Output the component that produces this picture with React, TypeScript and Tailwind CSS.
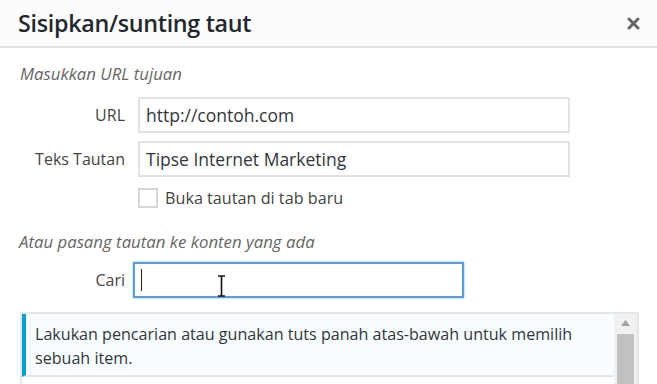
import React from 'react';

const font = { fontFamily: '"Open Sans", "Noto Sans", "Liberation Sans", sans-serif' };

function Field({ label, value }: { label: string; value: string }) {
  return (
    <div className="flex items-center">
      <div className="w-[105px] text-right text-[16px] text-[#444] mr-[13px]">{label}</div>
      <div className="w-[432px] h-[36px] border-2 border-[#e2e2e2] bg-white flex items-center px-[6px] text-[17.5px] text-[#32373c]">
        {value}
      </div>
    </div>
  );
}

export default function App() {
  return (
    <div className="w-[657px] h-[384px] bg-white overflow-hidden relative" style={font}>
      {/* Header */}
      <div className="h-[48px] bg-[#fcfcfc] border-b-2 border-[#e1e1e1] flex items-center justify-between pl-[18px] pr-[17px]">
        <h1 className="text-[23.3px] leading-[28px] font-semibold text-[#23282d] tracking-[-0.3px]">Sisipkan/sunting taut</h1>
        <svg width="13" height="13" viewBox="0 0 13 13" className="mt-[1px]">
          <path d="M2 2 L11 11 M11 2 L2 11" stroke="#666" strokeWidth="3" strokeLinecap="round" />
        </svg>
      </div>

      {/* Body */}
      <div className="pl-[20px]">
        <p className="italic text-[16.8px] text-[#666] mt-[15px] leading-[22px]">Masukkan URL tujuan</p>

        <div className="mt-[12px] flex flex-col gap-[8px]">
          <Field label="URL" value="http://contoh.com" />
          <Field label="Teks Tautan" value="Tipse Internet Marketing" />
        </div>

        <div className="flex items-center mt-[10px] ml-[118px]">
          <div className="w-[20px] h-[20px] border-2 border-[#d6d6d6] bg-white" />
          <span className="ml-[7px] text-[16.2px] leading-[22px] text-[#444]">Buka tautan di tab baru</span>
        </div>

        <p className="italic text-[16.8px] text-[#666] mt-[22px] leading-[22px] -ml-[1px]">Atau pasang tautan ke konten yang ada</p>

        <div className="flex items-center mt-[9px]">
          <div className="w-[105px] text-right text-[16px] text-[#444] mr-[8px]">Cari</div>
          <div className="relative w-[331px] h-[36px] border-2 border-[#5b9dd9] shadow-[0_0_2px_rgba(30,140,190,0.6)] bg-white">
            <div className="absolute left-[6px] top-[5px] w-[1px] h-[22px] bg-[#222]" />
          </div>
        </div>

        {/* Results */}
        <div className="mt-[14px] w-[619px] h-[80px] border-t-2 border-x-2 border-[#e6e6e6] flex">
          <div className="flex-1 flex flex-col">
            <div className="bg-[#f7fcfe] border-l-4 border-[#00a0d2] pl-[9px] pt-[8px] pb-[5px] text-[16.1px] leading-[24px] text-[#32373c] border-b-2 border-b-[#e6e6e6]">
              Lakukan pencarian atau gunakan tuts panah atas-bawah untuk memilih
              <br />
              sebuah item.
            </div>
          </div>
          <div className="w-[23px] bg-[#f1f1f1] flex flex-col items-center">
            <svg width="9" height="6" viewBox="0 0 9 6" className="mt-[6px]">
              <path d="M0 6 L4.5 0 L9 6 Z" fill="#a3a3a3" />
            </svg>
            <div className="mt-[8px] w-[17px] flex-1 bg-[#c1c1c1]" />
          </div>
        </div>
      </div>

      {/* mouse I-beam cursor */}
      <svg className="absolute left-[217px] top-[275px]" width="9" height="22" viewBox="0 0 9 22">
        <path d="M1 1 H8 M4.5 1 V21 M1 21 H8" stroke="#111" strokeWidth="1.6" fill="none" />
      </svg>
    </div>
  );
}
